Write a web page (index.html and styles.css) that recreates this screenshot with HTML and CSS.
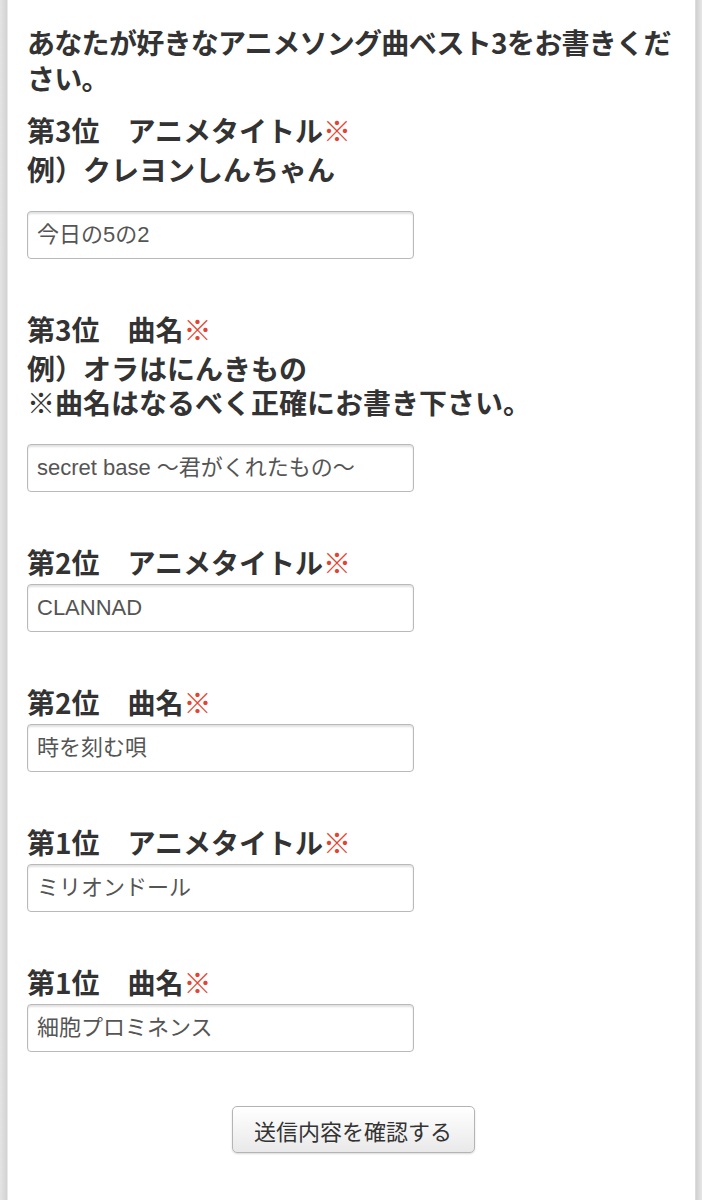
FILE: index.html
```html
<!DOCTYPE html>
<html lang="ja">
<head>
<meta charset="utf-8">
<link rel="stylesheet" href="styles.css">
</head>
<body>
<div class="page">
  <p class="heading">あなたが好きなアニメソング曲ベスト3をお書きください。</p>

  <div class="field first">
    <div class="label">第3位　アニメタイトル<span class="req">※</span></div>
    <div class="note">
      <div class="note-line">例）クレヨンしんちゃん</div>
    </div>
    <div class="input">今日の5の2</div>
  </div>

  <div class="field">
    <div class="label">第3位　曲名<span class="req">※</span></div>
    <div class="note">
      <div class="note-line">例）オラはにんきもの</div>
      <div class="note-line">※曲名はなるべく正確にお書き下さい。</div>
    </div>
    <div class="input">secret base 〜君がくれたもの〜</div>
  </div>

  <div class="field">
    <div class="label">第2位　アニメタイトル<span class="req">※</span></div>
    <div class="input">CLANNAD</div>
  </div>

  <div class="field">
    <div class="label">第2位　曲名<span class="req">※</span></div>
    <div class="input">時を刻む唄</div>
  </div>

  <div class="field">
    <div class="label">第1位　アニメタイトル<span class="req">※</span></div>
    <div class="input">ミリオンドール</div>
  </div>

  <div class="field">
    <div class="label">第1位　曲名<span class="req">※</span></div>
    <div class="input">細胞プロミネンス</div>
  </div>

  <div class="actions">
    <button class="submit" type="button">送信内容を確認する</button>
  </div>
</div>
</body>
</html>
```

FILE: styles.css
```css
html, body {
  margin: 0;
  padding: 0;
}
body {
  background: linear-gradient(to right, #e4e4e4 0, #d2d2d2 7px, #fff 8px, #fff 694px, #d0d0d0 696px, #e6e6e6 702px);
  font-family: "Noto Sans CJK JP", "Noto Sans", sans-serif;
  color: #333;
  min-height: 1200px;
}
.page {
  margin: 0 7px 0 8px;
  padding: 24px 16px 40px 19px;
  background: #fff;
  min-height: 1136px;
}
.heading {
  margin: 0;
  font-size: 28px;
  line-height: 36px;
  font-weight: 700;
  letter-spacing: -0.7px;
}
.field {
  margin-top: 52px;
}
.field.first {
  margin-top: 16px;
}
.label {
  font-size: 28px;
  line-height: 36px;
  font-weight: 700;
  margin-bottom: 4px;
}
.req {
  color: #e4432f;
  font-weight: 400;
}
.note {
  display: flex;
  flex-direction: column;
  margin-top: 3px;
  margin-bottom: 25px;
}
.note-line {
  font-size: 28px;
  line-height: 34px;
  font-weight: 700;
}
.input {
  box-sizing: border-box;
  width: 387px;
  height: 48px;
  border: 1px solid #b9b9b9;
  border-radius: 4px;
  box-shadow: inset 0 2px 2px rgba(0, 0, 0, 0.12);
  padding: 0 9px;
  font-family: "Liberation Sans", "Noto Sans CJK JP", sans-serif;
  font-size: 22px;
  line-height: 46px;
  color: #555;
  font-weight: 400;
  white-space: nowrap;
  background: #fff;
}
.actions {
  display: flex;
  justify-content: center;
  margin-top: 54px;
}
.submit {
  width: 243px;
  height: 47px;
  border: 1px solid #b4b4b4;
  border-radius: 5px;
  background: linear-gradient(#ffffff, #e9e9e9);
  box-shadow: 0 1px 2px rgba(0, 0, 0, 0.15);
  font-family: "Noto Sans CJK JP", sans-serif;
  font-size: 22px;
  color: #333;
  padding: 0;
}
```
